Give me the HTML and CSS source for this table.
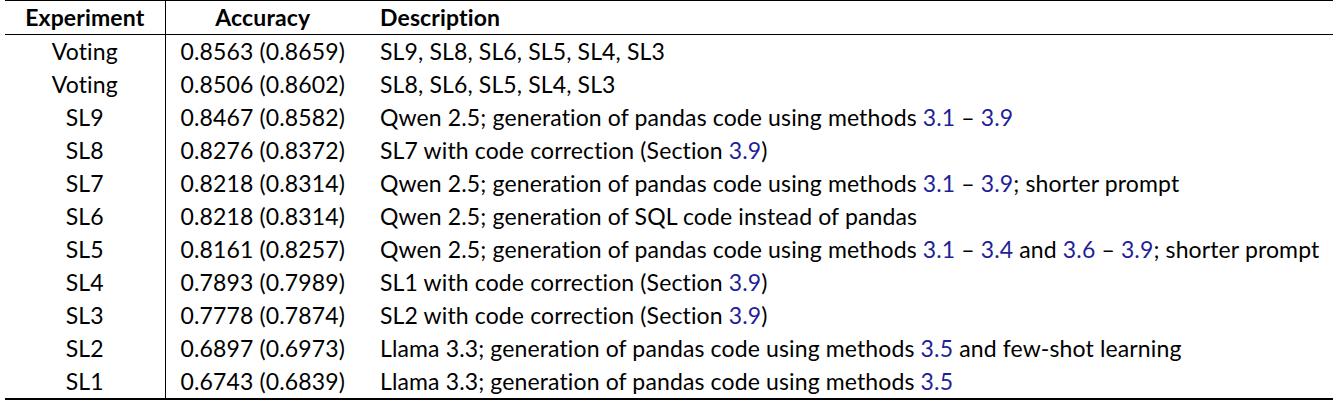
FILE: index.html
```html
<!DOCTYPE html>
<html>
<head>
<meta charset="utf-8">
<link rel="stylesheet" href="styles.css">
</head>
<body>
<table class="results">
  <thead>
    <tr><th class="exp">Experiment</th><th class="acc">Accuracy</th><th class="desc">Description</th></tr>
  </thead>
  <tbody>
    <tr><td class="exp">Voting</td><td class="acc">0.8563 (0.8659)</td><td class="desc">SL9, SL8, SL6, SL5, SL4, SL3</td></tr>
    <tr><td class="exp">Voting</td><td class="acc">0.8506 (0.8602)</td><td class="desc">SL8, SL6, SL5, SL4, SL3</td></tr>
    <tr><td class="exp">SL9</td><td class="acc">0.8467 (0.8582)</td><td class="desc">Qwen 2.5; generation of pandas code using methods <span class="ref">3.1</span> – <span class="ref">3.9</span></td></tr>
    <tr><td class="exp">SL8</td><td class="acc">0.8276 (0.8372)</td><td class="desc">SL7 with code correction (Section <span class="ref">3.9</span>)</td></tr>
    <tr><td class="exp">SL7</td><td class="acc">0.8218 (0.8314)</td><td class="desc">Qwen 2.5; generation of pandas code using methods <span class="ref">3.1</span> – <span class="ref">3.9</span>; shorter prompt</td></tr>
    <tr><td class="exp">SL6</td><td class="acc">0.8218 (0.8314)</td><td class="desc">Qwen 2.5; generation of SQL code instead of pandas</td></tr>
    <tr><td class="exp">SL5</td><td class="acc">0.8161 (0.8257)</td><td class="desc">Qwen 2.5; generation of pandas code using methods <span class="ref">3.1</span> – <span class="ref">3.4</span> and <span class="ref">3.6</span> – <span class="ref">3.9</span>; shorter prompt</td></tr>
    <tr><td class="exp">SL4</td><td class="acc">0.7893 (0.7989)</td><td class="desc">SL1 with code correction (Section <span class="ref">3.9</span>)</td></tr>
    <tr><td class="exp">SL3</td><td class="acc">0.7778 (0.7874)</td><td class="desc">SL2 with code correction (Section <span class="ref">3.9</span>)</td></tr>
    <tr><td class="exp">SL2</td><td class="acc">0.6897 (0.6973)</td><td class="desc">Llama 3.3; generation of pandas code using methods <span class="ref">3.5</span> and few-shot learning</td></tr>
    <tr><td class="exp">SL1</td><td class="acc">0.6743 (0.6839)</td><td class="desc">Llama 3.3; generation of pandas code using methods <span class="ref">3.5</span></td></tr>
  </tbody>
</table>
</body>
</html>
```

FILE: styles.css
```css
html, body {
  margin: 0;
  padding: 0;
  background: #ffffff;
}
body {
  padding-left: 5px;
}
.results {
  width: 1328px;
  border-collapse: collapse;
  font-family: Lato, "Liberation Sans", sans-serif;
  font-size: 23px;
  letter-spacing: 0.13px;
  color: #000000;
  border-top: 1px solid #000;
  border-bottom: 2px solid #000;
}
.results th, .results td {
  height: 33px;
  padding: 0;
  line-height: 33px;
  white-space: nowrap;
  box-sizing: border-box;
}
.results th {
  font-weight: 700;
}
.results thead tr {
  border-bottom: 1px solid #000;
}
.exp {
  width: 160px;
  text-align: center;
  border-right: 1px solid #000;
}
.acc {
  width: 195px;
  text-align: center;
}
.desc {
  text-align: left;
  padding-left: 20px !important;
}
.ref {
  color: #1f1f99;
}
```
